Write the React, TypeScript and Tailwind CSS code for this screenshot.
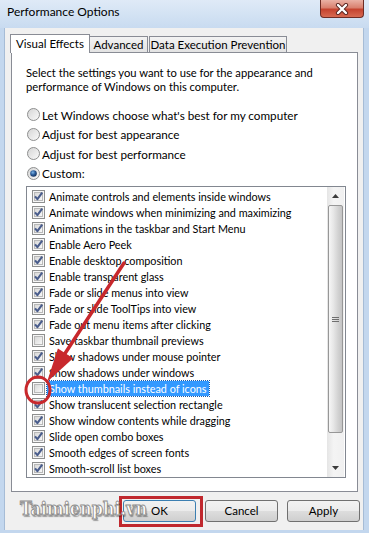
import React from "react";

const items: [string, boolean][] = [
  ["Animate controls and elements inside windows", true],
  ["Animate windows when minimizing and maximizing", true],
  ["Animations in the taskbar and Start Menu", true],
  ["Enable Aero Peek", true],
  ["Enable desktop composition", true],
  ["Enable transparent glass", true],
  ["Fade or slide menus into view", true],
  ["Fade or slide ToolTips into view", true],
  ["Fade out menu items after clicking", true],
  ["Save taskbar thumbnail previews", false],
  ["Show shadows under mouse pointer", true],
  ["Show shadows under windows", true],
  ["Show thumbnails instead of icons", false],
  ["Show translucent selection rectangle", true],
  ["Show window contents while dragging", true],
  ["Slide open combo boxes", true],
  ["Smooth edges of screen fonts", true],
  ["Smooth-scroll list boxes", true],
];

function Check({ checked }: { checked: boolean }) {
  return (
    <svg width="13" height="13" viewBox="0 0 13 13" className="shrink-0">
      <defs>
        <linearGradient id="cbg" x1="0" y1="0" x2="1" y2="1">
          <stop offset="0" stopColor="#d6d6d6" />
          <stop offset="1" stopColor="#fafafa" />
        </linearGradient>
      </defs>
      <rect x="0.5" y="0.5" width="12" height="12" fill="#f6f6f6" stroke="#8e8f8f" />
      <rect x="2.5" y="2.5" width="8" height="8" fill="url(#cbg)" stroke="#b9b9b9" />
      {checked && (
        <path d="M3 6.3 L5.4 9.2 L10.2 2.6" fill="none" stroke="#4a5d8c" strokeWidth="2.1" strokeLinejoin="round" />
      )}
    </svg>
  );
}

function Radio({ on }: { on: boolean }) {
  return (
    <svg width="13" height="13" viewBox="0 0 13 13" className="shrink-0">
      <defs>
        <linearGradient id="rbg" x1="0" y1="0" x2="1" y2="1">
          <stop offset="0" stopColor="#d4d4d4" />
          <stop offset="1" stopColor="#fbfbfb" />
        </linearGradient>
        <radialGradient id="rdot" cx="0.4" cy="0.35" r="0.7">
          <stop offset="0" stopColor="#7fb6e8" />
          <stop offset="0.5" stopColor="#2b5d9a" />
          <stop offset="1" stopColor="#142c55" />
        </radialGradient>
      </defs>
      <circle cx="6.5" cy="6.5" r="6" fill="url(#rbg)" stroke="#8e8f8f" />
      {on && <circle cx="6.5" cy="6.5" r="3.3" fill="url(#rdot)" />}
    </svg>
  );
}

const btnBase =
  "w-[73px] h-[22px] rounded-[3px] border flex items-center justify-center bg-[linear-gradient(to_bottom,#f2f2f2_0%,#ebebeb_50%,#dddddd_51%,#cfcfcf_100%)]";

export default function App() {
  return (
    <div className="relative w-[369px] h-[533px] overflow-hidden bg-[#c3d7ee] font-['Lato',sans-serif] text-[11.5px] text-black">
      {/* Title bar */}
      <div className="h-[28px] flex items-start justify-between bg-[linear-gradient(to_bottom,#dfeaf7,#c8dbf0)]">
        <span className="pl-[7px] pt-[4px] leading-[16px] text-[12px]">Performance Options</span>
        <div className="mr-[5px] w-[44px] h-[18px] rounded-b-[4px] border border-t-0 border-[#6e2c25] flex items-center justify-center bg-[linear-gradient(to_bottom,#eab1a5_0%,#d9806f_45%,#c5432f_55%,#d76a52_100%)]">
          <svg width="14" height="12" viewBox="0 0 14 12">
            <path d="M3 2 L11 10 M11 2 L3 10" stroke="#5a2520" strokeWidth="4.2" strokeLinecap="round" />
            <path d="M3 2 L11 10 M11 2 L3 10" stroke="#ffffff" strokeWidth="2.4" strokeLinecap="round" />
          </svg>
        </div>
      </div>

      {/* Body */}
      <div className="ml-[4px] mr-[5px] h-[502px] bg-[#f0f0f0] border-x border-[#a6bcd6] flex flex-col">
        {/* Tabs */}
        <div className="pt-[6px] pl-[5px] h-[24px] flex items-end">
          <div className="relative z-10 -mb-px h-[19px] w-[80px] bg-white border border-b-0 border-[#898c95] flex items-center justify-center leading-[16px] pb-[1px]">
            Visual Effects
          </div>
          <div className="h-[16px] w-[59px] -ml-px border border-b-0 border-[#898c95] bg-[linear-gradient(to_bottom,#f3f3f3,#e3e3e3)] flex items-center justify-center leading-[14px]">
            Advanced
          </div>
          <div className="h-[16px] w-[138px] ml-px border border-b-0 border-[#898c95] bg-[linear-gradient(to_bottom,#f3f3f3,#e3e3e3)] flex items-center justify-center leading-[14px]">
            Data Execution Prevention
          </div>
        </div>

        {/* Panel */}
        <div className="ml-[6px] w-[347px] h-[440px] bg-white border border-[#898c95] pl-[14px] pt-[13px]">
          <div className="leading-[14px] text-[11.2px]">
            Select the settings you want to use for the appearance and
            <br />
            performance of Windows on this computer.
          </div>
          <div className="mt-[11px] flex flex-col">
            {[
              ["Let Windows choose what's best for my computer", false],
              ["Adjust for best appearance", false],
              ["Adjust for best performance", false],
              ["Custom:", true],
            ].map(([label, on]) => (
              <div key={label as string} className="h-[19.5px] flex items-center pl-[1px]">
                <Radio on={on as boolean} />
                <span className="ml-[2px] leading-[16px] text-[11.7px]">{label as string}</span>
              </div>
            ))}
          </div>

          {/* List box */}
          <div className="mt-[3px] w-[320px] h-[292px] border border-[#828790] bg-white flex">
            <div className="w-[300px] pt-[1px] flex flex-col text-[10.8px]">
              {items.map(([label, checked], i) => {
                const sel = i === 12;
                return (
                  <div key={label} className="h-[16px] flex items-center pl-[5px] whitespace-nowrap">
                    <Check checked={checked} />
                    <span
                      className={
                        "ml-[2px] px-[2px] h-[15px] flex items-center leading-[15px] " +
                        (sel ? "bg-[#3399ff] text-white outline outline-dotted outline-1 outline-[#1b5aa8]" : "")
                      }
                    >
                      {label}
                    </span>
                  </div>
                );
              })}
            </div>
            {/* Scrollbar */}
            <div className="w-[17px] h-full flex flex-col bg-[linear-gradient(to_right,#e5e5e5,#f4f4f4_40%,#f0f0f0)]">
              <div className="h-[18px] flex items-center justify-center">
                <svg width="7" height="4" viewBox="0 0 7 4">
                  <path d="M0 4 L3.5 0 L7 4 Z" fill="#3b3b3b" />
                </svg>
              </div>
              <div className="mx-[1px] h-[228px] rounded-[2px] border border-[#979797] bg-[linear-gradient(to_right,#f6f6f6_0%,#e6e6e6_35%,#d2d2d2_70%,#c4c4c4_100%)] flex items-center justify-center">
                <svg width="7" height="7" viewBox="0 0 7 7">
                  <path d="M0 1.5 H7 M0 3.5 H7 M0 5.5 H7" stroke="#6f6f6f" strokeWidth="1" />
                </svg>
              </div>
              <div className="flex-1 flex items-end justify-center pb-[7px]">
                <svg width="7" height="4" viewBox="0 0 7 4">
                  <path d="M0 0 L3.5 4 L7 0 Z" fill="#3b3b3b" />
                </svg>
              </div>
            </div>
          </div>
        </div>

        {/* Buttons */}
        <div className="mt-[8px] flex justify-end gap-[9px] pr-[3px]">
          <div className={btnBase + " border-[#3c7fb1] bg-[linear-gradient(to_bottom,#f1f8fd_0%,#e4f1fa_50%,#d4e7f5_51%,#c7dff2_100%)]"}>OK</div>
          <div className={btnBase + " border-[#707070]"}>Cancel</div>
          <div className={btnBase + " border-[#707070]"}>Apply</div>
        </div>
      </div>

      {/* Annotations */}
      <svg className="absolute inset-0 pointer-events-none" width="369" height="533" viewBox="0 0 369 533">
        <line x1="124" y1="263" x2="64" y2="355" stroke="#c8282c" strokeWidth="3.5" strokeLinecap="round" />
        <polygon points="47,382 73.1,358.3 57.9,348.5" fill="#c8282c" />
        <ellipse cx="38" cy="390" rx="12" ry="13" fill="none" stroke="#c8282c" strokeWidth="3" />
      </svg>
      <div className="absolute left-[20px] top-[498px] w-[84px] pointer-events-none" />
      <div className="absolute left-[119px] top-[496px] w-[84px] h-[31px] border-[3px] border-[#c0282e] pointer-events-none" />
      <div className="absolute left-[20px] top-[500px] origin-top-left scale-y-[1.1] font-['DejaVu_Serif',serif] font-bold text-[16px] leading-[18px] text-white [-webkit-text-stroke:0.8px_#8c8c8c] [text-shadow:1px_1px_1px_rgba(0,0,0,0.35)] pointer-events-none">
        Taimienphi.vn
      </div>
    </div>
  );
}
